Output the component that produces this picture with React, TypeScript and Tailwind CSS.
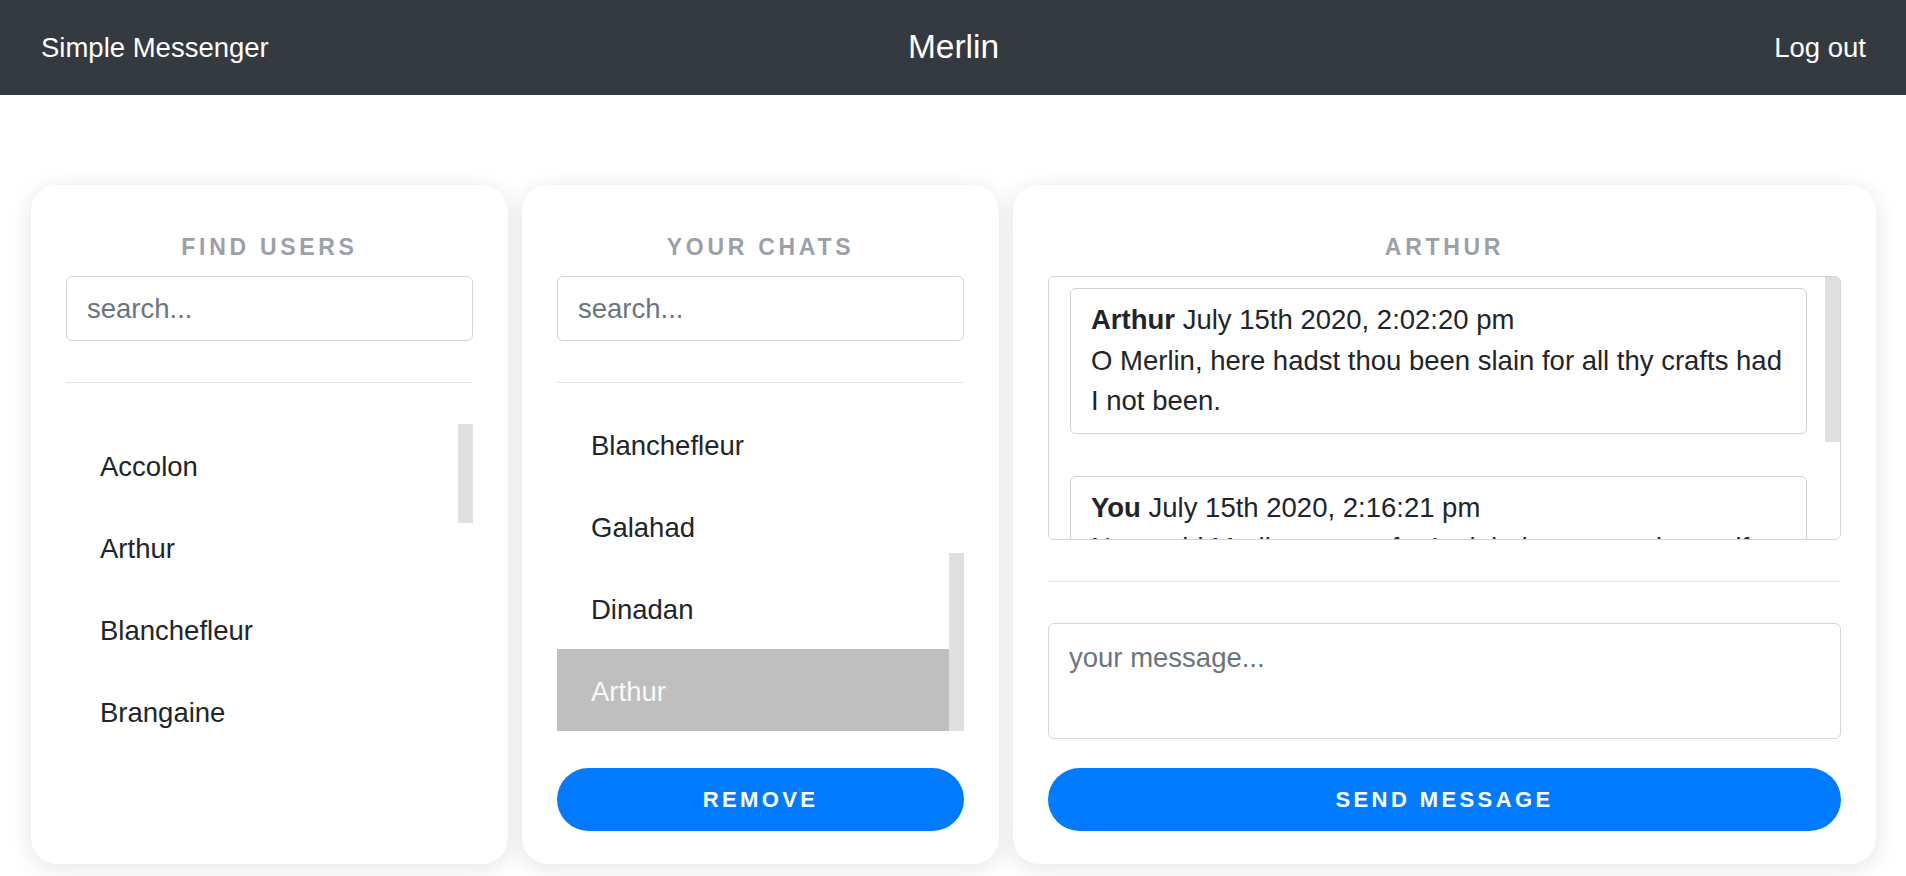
import { FC } from "react"

const font = { fontFamily: '"Liberation Sans", Arial, sans-serif' }

const findUsers = ["Accolon", "Arthur", "Blanchefleur", "Brangaine"]
const chats = ["Blanchefleur", "Galahad", "Dinadan", "Arthur"]

const CardTitle: FC<{ text: string }> = ({ text }) => (
    <h2 className="h-[28px] mb-[15px] text-center text-[23px] leading-[28px] font-bold tracking-[3.7px] uppercase text-[#9ca1a7]">
        {text}
    </h2>
)

const Search: FC = () => (
    <input
        className="h-[65px] w-full rounded-[6px] border border-[#ced4da] px-[20px] text-[27.5px] text-[#495057] placeholder:text-[#6c757d] outline-none"
        placeholder="search..."
    />
)

const Divider: FC = () => <div className="my-[41px] h-px bg-[#e6e6e6]" />

const Row: FC<{ name: string; active?: boolean }> = ({ name, active }) => (
    <div
        className={
            active
                ? "h-[82px] shrink-0 flex items-center pl-[34px] pt-[3px] text-[27.5px] bg-[#bfbfbf] text-[#f8f9fa]"
                : "h-[82px] shrink-0 flex items-center pl-[34px] pt-[3px] text-[27.5px] text-[#212529]"
        }
    >
        {name}
    </div>
)

const Button: FC<{ text: string }> = ({ text }) => (
    <button className="h-[63px] w-full rounded-full bg-[#007bff] text-white text-[22px] font-bold tracking-[3.4px] uppercase">
        {text}
    </button>
)

const Card: FC<{ className: string; children: React.ReactNode }> = ({ className, children }) => (
    <div className={"h-[679px] rounded-[26px] bg-white px-[35px] pt-[48px] flex flex-col shadow-[0_4px_24px_rgba(0,0,0,0.11)] " + className}>
        {children}
    </div>
)

const App: FC = () => {
    return (
        <div style={font} className="min-h-[876px] bg-white">
            <header className="h-[95px] bg-[#343a40] grid grid-cols-3 items-center pl-[41px] pr-[40px] text-white">
                <span className="text-[27.5px]">Simple Messenger</span>
                <span className="text-center text-[33.5px]">Merlin</span>
                <span className="text-right text-[27.5px]">Log out</span>
            </header>

            <main className="flex gap-[14px] pl-[31px] pr-[30px] pt-[90px]">
                {/* find users */}
                <Card className="w-[477px] shrink-0">
                    <CardTitle text="Find users" />
                    <Search />
                    <Divider />
                    <div className="h-[307px] flex">
                        <div className="flex-1 overflow-hidden flex flex-col">
                            {findUsers.map((u) => (
                                <Row key={u} name={u} />
                            ))}
                        </div>
                        <div className="w-[15px]">
                            <div className="h-[99px] bg-[#e0e0e0]" />
                        </div>
                    </div>
                </Card>

                {/* chats */}
                <Card className="w-[477px] shrink-0">
                    <CardTitle text="Your chats" />
                    <Search />
                    <Divider />
                    <div className="h-[307px] flex">
                        <div className="flex-1 overflow-hidden">
                            <div className="-mt-[21px] flex flex-col">
                                {chats.map((c) => (
                                    <Row key={c} name={c} active={c === "Arthur"} />
                                ))}
                            </div>
                        </div>
                        <div className="w-[15px] pt-[129px]">
                            <div className="h-[178px] bg-[#e0e0e0]" />
                        </div>
                    </div>
                    <div className="mt-[37px]">
                        <Button text="Remove" />
                    </div>
                </Card>

                {/* conversation */}
                <Card className="flex-1">
                    <CardTitle text="Arthur" />
                    <div className="h-[264px] flex rounded-[6px] border border-[#ced4da] overflow-hidden">
                        <div className="flex-1 overflow-hidden pl-[21px] pr-[18px] pt-[11px] text-[27.5px] leading-[40.5px] text-[#212529]">
                            <div className="mb-[42px] rounded-[6px] border border-[#ced4da] px-[20px] py-[11px]">
                                <div>
                                    <b>Arthur</b> July 15th 2020, 2:02:20 pm
                                </div>
                                <div>O Merlin, here hadst thou been slain for all thy crafts had I not been.</div>
                            </div>
                            <div className="rounded-[6px] border border-[#ced4da] px-[20px] py-[11px]">
                                <div>
                                    <b>You</b> July 15th 2020, 2:16:21 pm
                                </div>
                                <div>Nay, said Merlin, not so, for I might have saved myself an I had would.</div>
                            </div>
                        </div>
                        <div className="w-[15px]">
                            <div className="h-[165px] bg-[#e0e0e0]" />
                        </div>
                    </div>
                    <Divider />
                    <textarea
                        className="h-[116px] w-full resize-none rounded-[6px] border border-[#d6d6d6] px-[20px] py-[14px] text-[27.5px] leading-[40.5px] text-[#495057] placeholder:text-[#6c757d] outline-none"
                        placeholder="your message..."
                    />
                    <div className="mt-[29px]">
                        <Button text="Send message" />
                    </div>
                </Card>
            </main>
        </div>
    )
}

export default App
